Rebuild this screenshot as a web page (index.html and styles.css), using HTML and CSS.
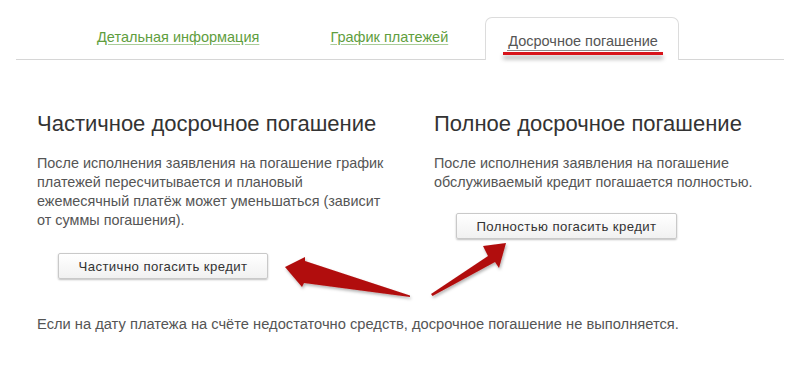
FILE: index.html
```html
<!DOCTYPE html>
<html lang="ru">
<head>
<meta charset="utf-8">
<link rel="stylesheet" href="styles.css">
</head>
<body>
<div class="page">
  <nav class="tabs">
    <a class="tab tab-link first">Детальная информация</a>
    <a class="tab tab-link second">График платежей</a>
    <div class="tab tab-active"><span class="active-label">Досрочное погашение</span></div>
  </nav>
  <div class="columns">
    <section class="col">
      <h2 class="col-title">Частичное досрочное погашение</h2>
      <p class="col-text left-text">После исполнения заявления на погашение график платежей пересчитывается и плановый ежемесячный платёж может уменьшаться (зависит от суммы погашения).</p>
      <div class="btn-row left-btn"><button class="btn">Частично погасить кредит</button></div>
    </section>
    <section class="col">
      <h2 class="col-title">Полное досрочное погашение</h2>
      <p class="col-text right-text">После исполнения заявления на погашение обслуживаемый кредит погашается полностью.</p>
      <div class="btn-row right-btn"><button class="btn">Полностью погасить кредит</button></div>
    </section>
  </div>
  <p class="note">Если на дату платежа на счёте недостаточно средств, досрочное погашение не выполняется.</p>
  <svg class="arrows" width="800" height="382" viewBox="0 0 800 382">
    <defs>
      <filter id="sh" x="-20%" y="-20%" width="140%" height="140%">
        <feDropShadow dx="1" dy="2" stdDeviation="1.5" flood-color="#000" flood-opacity="0.3"/>
      </filter>
    </defs>
    <g fill="#b10c0c" filter="url(#sh)">
      <polygon points="410,297 304,283 302,287 285,267 305,257 305,261 410,295.5"/>
      <polygon points="431,294 488,256 483,246 506,243 499,268 495,262 432.5,296"/>
    </g>
  </svg>
</div>
</body>
</html>
```
FILE: styles.css
```css
html, body {
  margin: 0;
  padding: 0;
  background: #fff;
}
.page {
  position: relative;
  width: 800px;
  height: 382px;
  overflow: hidden;
  font-family: "Liberation Sans", Arial, sans-serif;
}
.tabs {
  display: flex;
  align-items: flex-end;
  margin: 0 16px;
  padding: 16px 0 0 81px;
  height: 43px;
  border-bottom: 1px solid #d6d6d6;
}
.tab {
  font-size: 14.5px;
  line-height: 16px;
}
.tab-link {
  color: #5f9e3e;
  text-decoration: underline;
  text-decoration-color: #a9cc98;
  text-underline-offset: 2px;
  padding-bottom: 14px;
}
.first { margin-right: 71px; }
.second { margin-right: 37px; }
.tab-active {
  position: relative;
  height: 43px;
  box-sizing: border-box;
  padding: 15px 19px 0 21px;
  border: 1px solid #dcdcdc;
  border-bottom: none;
  border-radius: 7px 7px 0 0;
  background: #fff;
  margin-bottom: -1px;
  color: #555;
}
.active-label {
  display: inline-block;
  padding: 0 1px 1px;
  border-bottom: 1px solid #8a8a8a;
  line-height: 15px;
}
.tab-active::after {
  content: "";
  position: absolute;
  left: 17px;
  right: 15px;
  top: 34px;
  height: 3px;
  background: #d8141b;
  box-shadow: 0 4px 4px rgba(0,0,0,0.35);
}
.columns {
  display: grid;
  grid-template-columns: 397px 1fr;
  padding: 51px 0 0 37px;
}
.col-title {
  margin: 0;
  font-weight: normal;
  font-size: 22px;
  line-height: 26px;
  color: #333;
}
.col-text {
  margin: 17px 0 0;
  font-size: 14.4px;
  line-height: 19px;
  color: #555;
}
.left-text { max-width: 352px; }
.btn-row { display: flex; }
.left-btn { margin: 23px 0 0 21px; }
.right-btn { margin: 21px 0 0 22px; }
.btn {
  font-family: "Liberation Sans", Arial, sans-serif;
  font-size: 13.2px;
  color: #333;
  letter-spacing: 0.4px;
  background: linear-gradient(#fff, #f1f1f1);
  border: 1px solid #c9c9c9;
  border-radius: 2px;
  box-shadow: 0 1px 2px rgba(0,0,0,0.25);
  height: 26px;
  padding: 0 8px;
}
.left-btn .btn { width: 210px; }
.right-btn .btn { width: 221px; }
.note {
  margin: 36px 0 0 37px;
  font-size: 14.7px;
  line-height: 18px;
  color: #555;
}
.arrows {
  position: absolute;
  left: 0;
  top: 0;
  pointer-events: none;
}
```
